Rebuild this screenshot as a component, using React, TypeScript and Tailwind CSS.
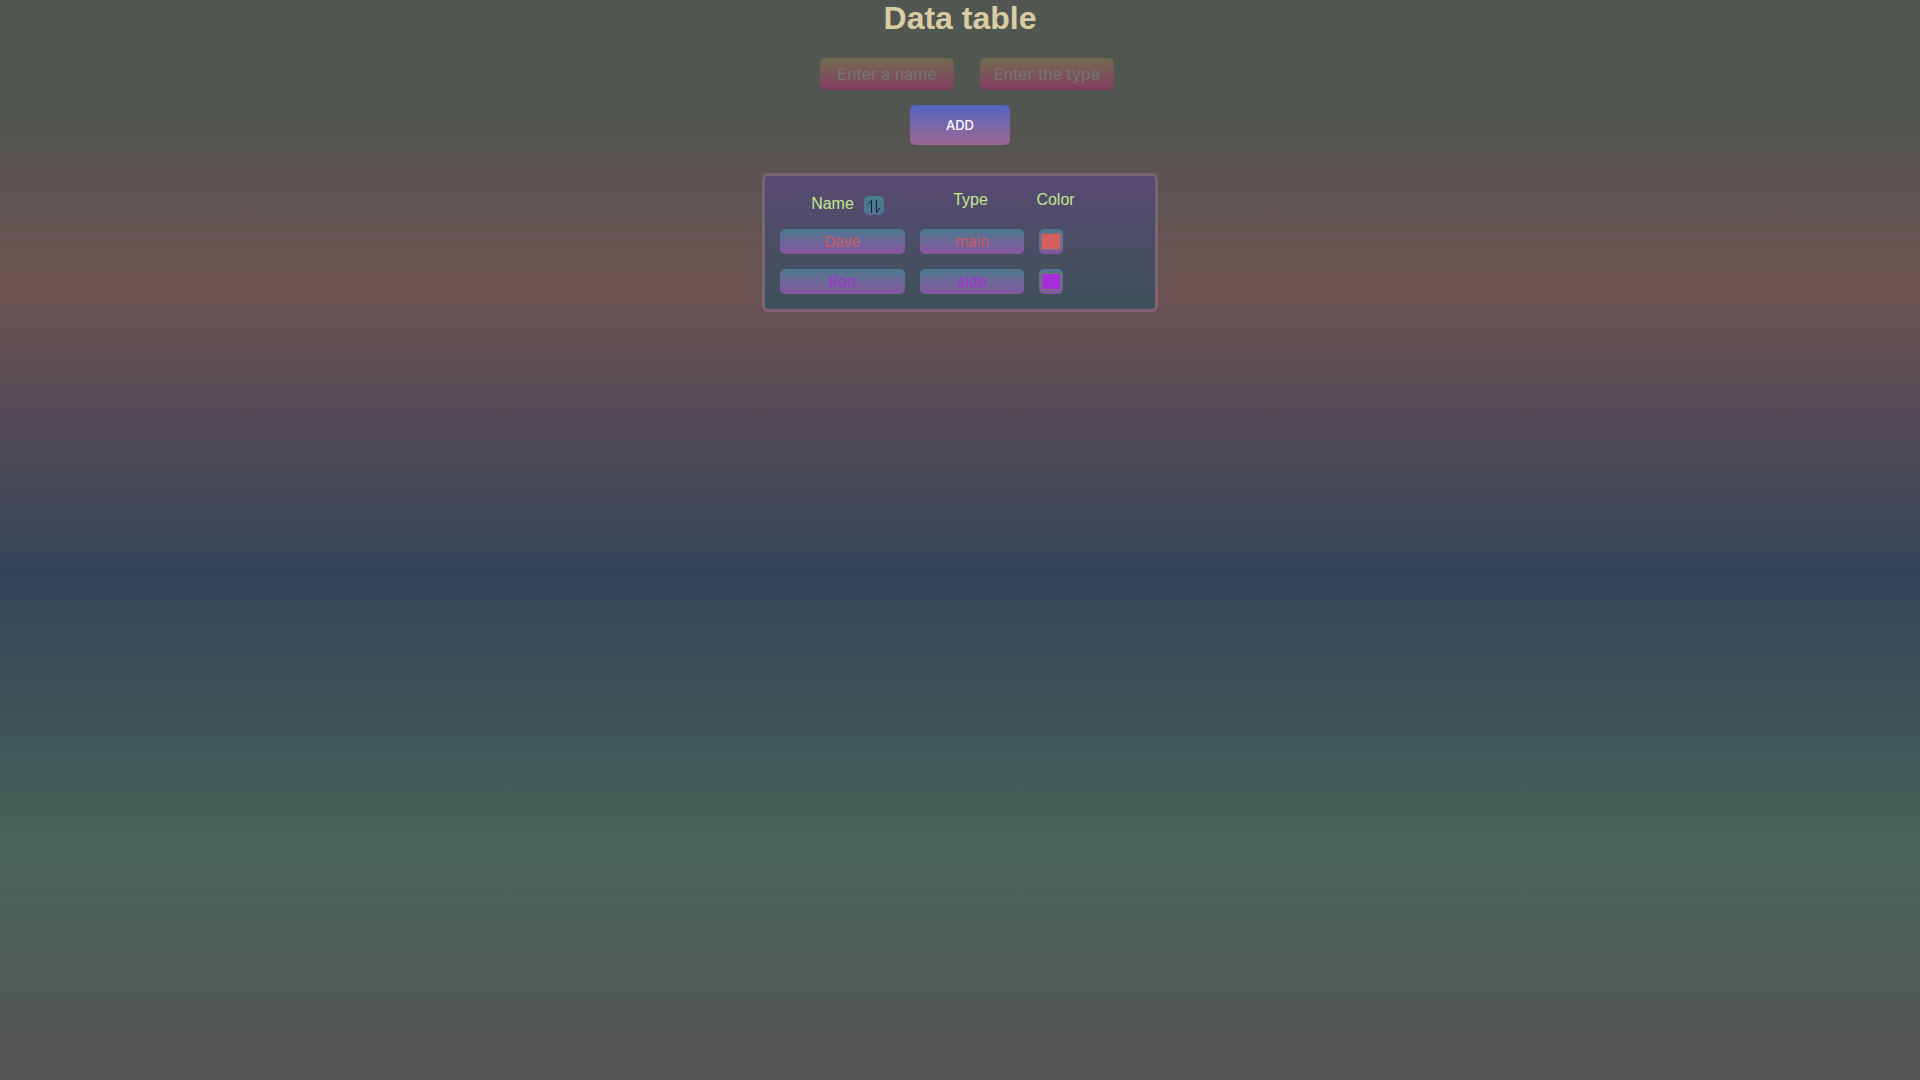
type Row = { name: string; type: string; color: string; text: string };

const rows: Row[] = [
  { name: "Dave", type: "main", color: "#d65e5e", text: "text-[#cc5c62]" },
  { name: "Ron", type: "side", color: "#a52fd6", text: "text-[#a52fd0]" },
];

const entry =
  "h-8 w-[134px] rounded-[5px] bg-linear-to-b from-[#716a4e] to-[#813d62] text-center font-[Inter,sans-serif] text-base text-[#ddd0a4] placeholder:text-[#757575] outline-none";
const field =
  "block h-[25px] rounded-[5px] bg-linear-to-b from-[#4b788f] to-[#8455a0] text-center font-[Inter,sans-serif] text-[15px] outline-none";

export default function App() {
  return (
    <main className="flex min-h-screen flex-col items-center bg-[linear-gradient(to_bottom,#515650_0%,#515650_10%,#6c5252_27%,#344358_53%,#476357_78%,#555555_98%)] font-['Liberation_Sans',sans-serif]">
      <h1 className="text-[32px] leading-9 font-bold text-[#d9cca3]">Data table</h1>
      <form className="flex flex-col items-center" onSubmit={(e) => e.preventDefault()}>
        <div className="mt-[22px] ml-3.5 flex gap-[26px]">
          <input className={entry} aria-label="Name" placeholder="Enter a name" />
          <input className={entry} aria-label="Type" placeholder="Enter the type" />
        </div>
        <button className="mt-[15px] h-10 w-[100px] rounded-[5px] bg-linear-to-b from-[#5364c2] to-[#9b6791] pt-0.5 font-[Inter,sans-serif] text-[13px] font-medium text-white">
          ADD
        </button>
      </form>
      <section className="mt-7 rounded-md border-[3px] border-[#b98fc0]/30 bg-linear-to-b from-[#574a72] to-[#3e5159] bg-clip-padding pb-[7px]">
        <table className="w-[390px] table-fixed border-separate border-spacing-0 text-[#c3e88d]">
          <colgroup>
            <col className="w-[147px]" />
            <col className="w-[119px]" />
            <col className="w-[49px]" />
            <col />
          </colgroup>
          <thead>
            <tr className="h-[46px]">
              <th className="pt-5 pl-[18px] align-top font-normal">
                <div className="flex items-start justify-center gap-2.5 leading-4">
                  Name
                  <button
                    aria-label="Sort by name"
                    className="flex h-[19px] w-5 items-center justify-center rounded-[5px] bg-linear-to-b from-[#478189] via-[#4b7890] to-[#527096]"
                  >
                    <svg viewBox="0 0 20 19" className="h-[19px] w-5" fill="none" stroke="#171c2c" strokeWidth="1">
                      <path d="M7.500 17V4.500L4 8.500M12.500 4V16.500L16 12" />
                    </svg>
                  </button>
                </div>
              </th>
              <th className="pt-[14px] pr-0.5 align-top leading-5 font-normal">Type</th>
              <th className="pt-[14px] align-top leading-5 font-normal">Color</th>
              <td />
            </tr>
          </thead>
          <tbody>
            {rows.map((r) => (
              <tr key={r.name} className="h-10">
                <td className="pt-[7px] pb-2 pl-[15px]">
                  <input aria-label="Row name" defaultValue={r.name} className={`${field} w-[125px] ${r.text}`} />
                </td>
                <td className="pt-[7px] pb-2 pl-2">
                  <input aria-label="Row type" defaultValue={r.type} className={`${field} w-[104px] ${r.text}`} />
                </td>
                <td className="pt-[7px] pb-2 pl-2">
                  <input
                    type="color"
                    aria-label="Row color"
                    defaultValue={r.color}
                    className={`${field} w-6 px-0.5 py-1 [&::-webkit-color-swatch]:rounded-none [&::-webkit-color-swatch]:border [&::-webkit-color-swatch]:border-[#777777] [&::-webkit-color-swatch-wrapper]:p-0`}
                  />
                </td>
                <td />
              </tr>
            ))}
          </tbody>
        </table>
      </section>
    </main>
  );
}
